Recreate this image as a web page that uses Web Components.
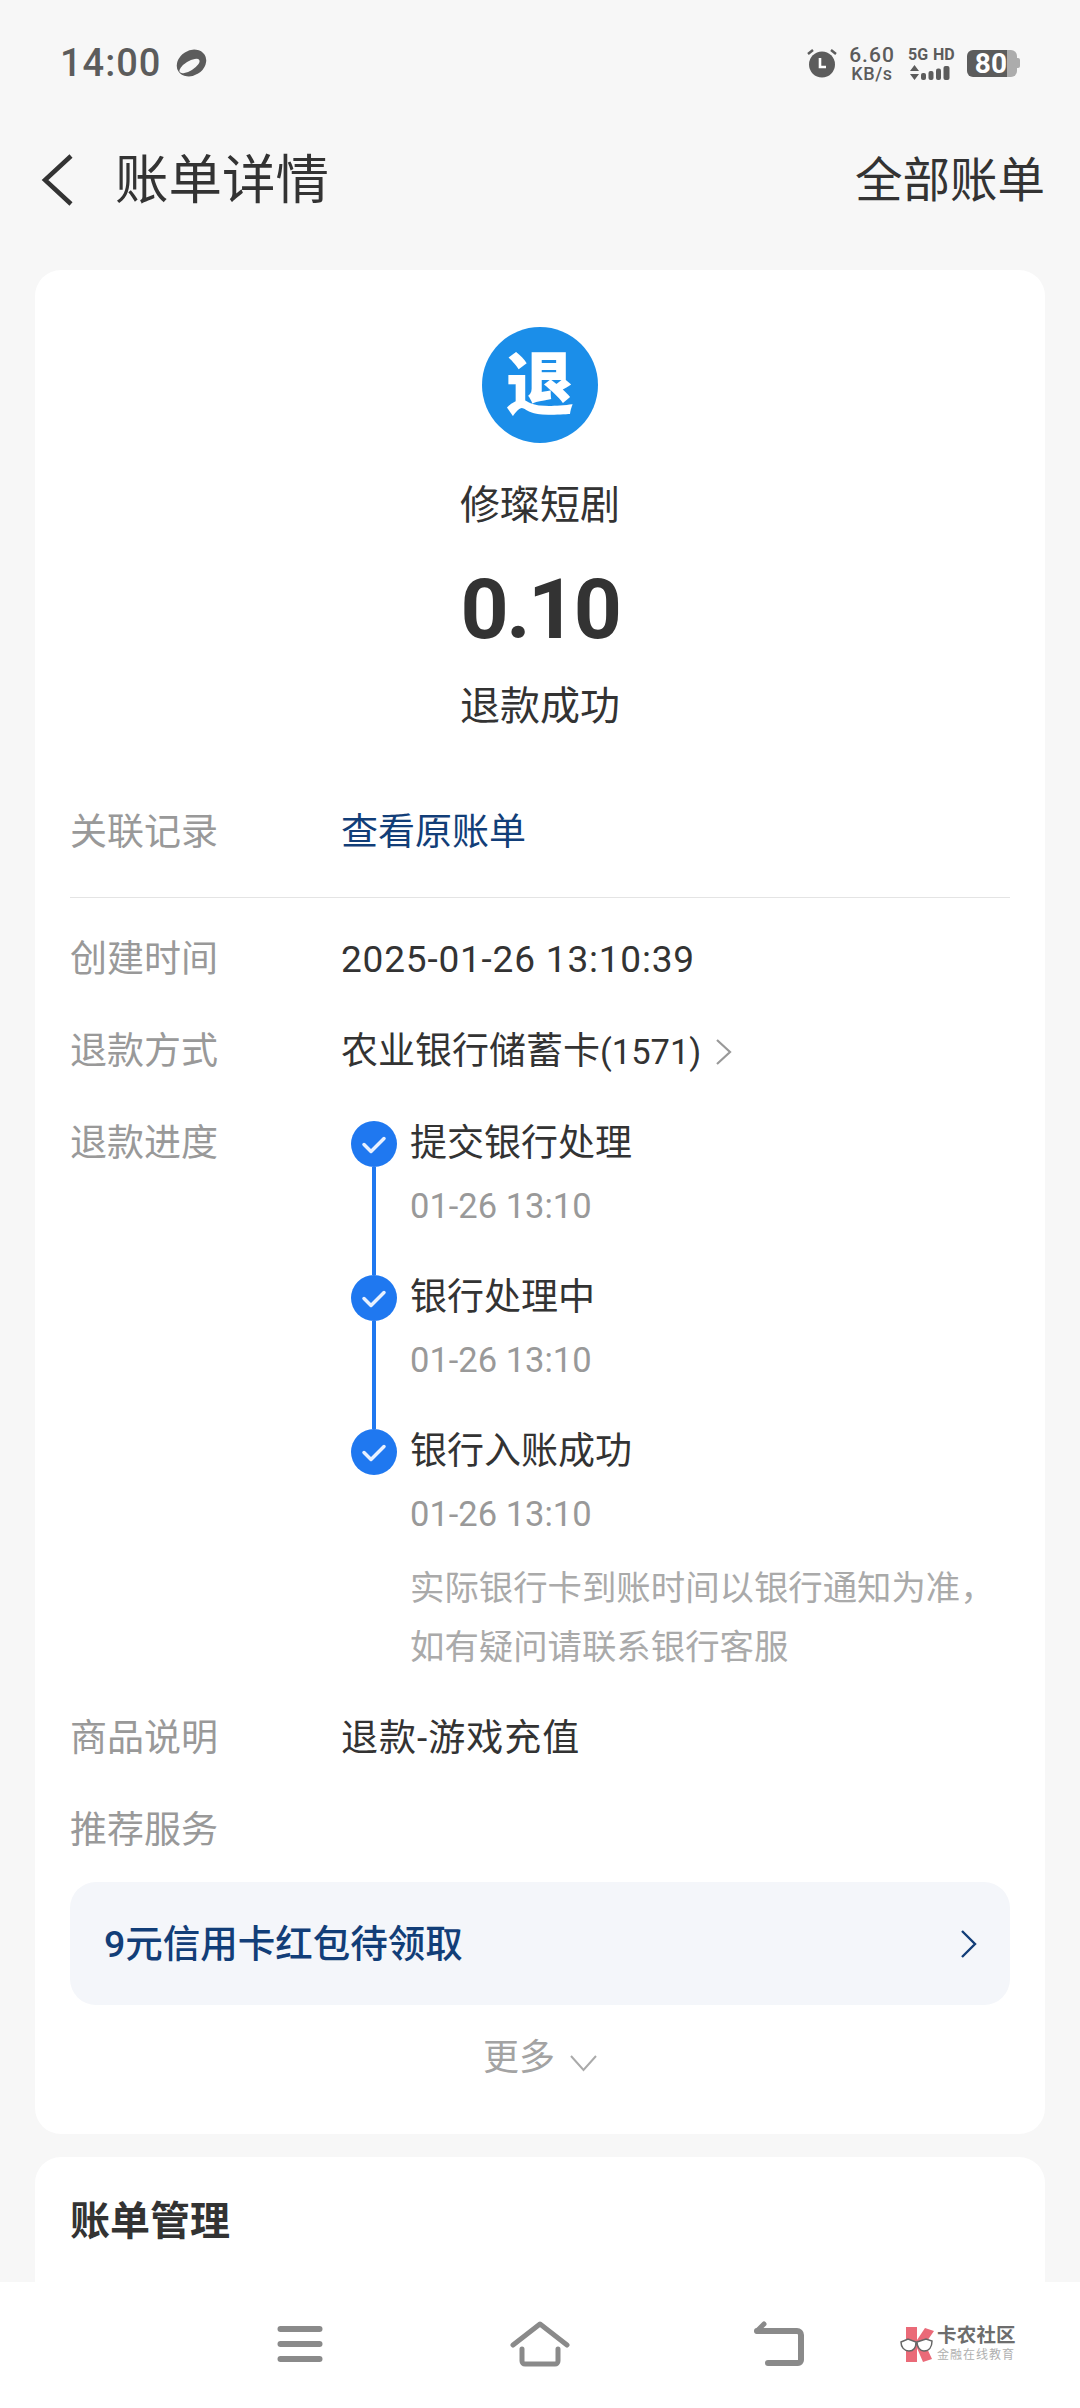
<!DOCTYPE html>
<html lang="zh">
<head>
<meta charset="utf-8">
<title>账单详情</title>
<style>
  html, body { margin: 0; padding: 0; }
  body {
    width: 1080px;
    height: 2408px;
    overflow: hidden;
    background: #f7f7f7;
    color: #333;
    font-family: Roboto, "Noto Sans CJK SC", sans-serif;
    display: flex;
    flex-direction: column;
  }
  main { flex: 1; min-height: 0; overflow: hidden; display: flex; flex-direction: column; gap: 23px; padding: 0 35px; }
</style>
</head>
<body>
  <status-bar></status-bar>
  <title-bar heading="账单详情" action="全部账单"></title-bar>
  <main>
    <bill-card>
      <bill-head name="修璨短剧" amount="0.10" state="退款成功"></bill-head>
      <info-row label="关联记录" top="66"><span style="color:#123e78">查看原账单</span></info-row>
      <hr-line></hr-line>
      <info-row label="创建时间"><span style="letter-spacing:.8px">2025-01-26 13:10:39</span></info-row>
      <info-row label="退款方式" more><span>农业银行储蓄卡<span style="font-size:34.500px">(1571)</span></span></info-row>
      <info-row label="退款进度">
        <progress-step heading="提交银行处理" time="01-26 13:10"></progress-step>
        <progress-step heading="银行处理中" time="01-26 13:10"></progress-step>
        <progress-step heading="银行入账成功" time="01-26 13:10" last>实际银行卡到账时间以银行通知为准，<br>如有疑问请联系银行客服</progress-step>
      </info-row>
      <info-row label="商品说明"><span style="letter-spacing:1px">退款-游戏充值</span></info-row>
      <info-row label="推荐服务"></info-row>
      <promo-link>9元信用卡红包待领取</promo-link>
      <more-link>更多</more-link>
    </bill-card>
    <bill-card>
      <section-title>账单管理</section-title>
    </bill-card>
  </main>
  <bottom-nav></bottom-nav>

<script>
class StatusBar extends HTMLElement {
  constructor() {
    super();
    this.attachShadow({ mode: 'open' });
    this.shadowRoot.innerHTML = `
    <style>
      :host { display: flex; align-items: center; height: 126px; padding: 0 60px 0 60px; color: #5c5c5c; flex: none; }
      .time { font-size: 38px; font-weight: 500; letter-spacing: 1px; line-height: 1; }
      .planet { margin-left: 15px; }
      .right { margin-left: auto; display: flex; align-items: center; }
      .speed { margin-left: 10px; width: 50px; display: flex; flex-direction: column; align-items: center; font-weight: 500; margin-top: 1px; }
      .speed b { font-size: 21px; line-height: 20px; font-weight: 500; letter-spacing: 1px; }
      .speed span { font-size: 18px; line-height: 18px; letter-spacing: .6px; }
      .net { margin-left: 11px; width: 48px; display: flex; flex-direction: column; gap: 3px; }
      .net b { font-size: 16px; line-height: 15px; font-weight: 700; white-space: nowrap; word-spacing: 1px; }
      .batt { margin-left: 11px; display: flex; align-items: center; }
      .level { width: 40px; height: 27px; background: #5c5c5c; border-radius: 6px 0 0 6px; color: #fff; font-size: 28px; font-weight: 700; line-height: 27px; text-align: right; box-sizing: border-box; letter-spacing: 0; }
      .rest { width: 10px; height: 27px; background: #acacac; border-radius: 0 6px 6px 0; }
      .nub { width: 3px; height: 10px; background: #acacac; border-radius: 0 2px 2px 0; }
    </style>
    <span class="time">14:00</span>
    <svg class="planet" width="31" height="28" viewBox="0 0 31 28">
      <ellipse cx="15.500" cy="14" rx="15.500" ry="12.500" transform="rotate(-32 15.500 14)" fill="#5c5c5c"/>
      <ellipse cx="13.500" cy="17" rx="11.500" ry="4.600" transform="rotate(-32 13.500 17)" fill="#f7f7f7"/>
    </svg>
    <div class="right">
      <svg width="30" height="30" viewBox="0 0 30 30">
        <circle cx="15" cy="16.500" r="13" fill="#5c5c5c"/>
        <path d="M1 6l5-4M29 6l-5-4" stroke="#5c5c5c" stroke-width="2.500" fill="none"/>
        <path d="M13 10v9h6" stroke="#fff" stroke-width="2.600" fill="none"/>
      </svg>
      <div class="speed"><b>6.60</b><span>KB/s</span></div>
      <div class="net">
        <b>5G HD</b>
        <svg width="48" height="15" viewBox="0 0 48 15" fill="#5c5c5c">
          <path d="M6.500 0l4.500 6H2zM6.500 15L2 9h9z"/>
          <rect x="13" y="8" width="5" height="7" rx="2"/>
          <rect x="20.500" y="6" width="5" height="9" rx="2"/>
          <rect x="28" y="3.500" width="5" height="11.500" rx="2"/>
          <rect x="35.500" y="1" width="6" height="14" rx="2"/>
        </svg>
      </div>
      <div class="batt"><span class="level">80</span><span class="rest"></span><span class="nub"></span></div>
    </div>
    `;
  }
}

class TitleBar extends HTMLElement {
  constructor() {
    super();
    this.attachShadow({ mode: 'open' });
  }
  connectedCallback() {
    this.shadowRoot.innerHTML = `
    <style>
      :host { display: flex; align-items: center; height: 108px; margin-bottom: 36px; padding: 0 35px 0 41px; flex: none; color: #333; }
      h1 { margin: 2px 0 0 42px; font-size: 53.500px; font-weight: 400; line-height: 60px; }
      span { margin: 2px 0 0 auto; font-size: 47.500px; line-height: 60px; }
    </style>
    <svg width="32" height="52" viewBox="0 0 32 52"><path d="M30 2L4 26l26 24" fill="none" stroke="#333" stroke-width="4.500"/></svg>
    <h1>${this.getAttribute('heading')}</h1>
    <span>${this.getAttribute('action')}</span>
    `;
  }
}

class BillCard extends HTMLElement {
  constructor() {
    super();
    this.attachShadow({ mode: 'open' });
    this.shadowRoot.innerHTML = `
    <style>
      :host { display: block; background: #fff; border-radius: 26px; padding: 0 35px; flex: none; }
    </style>
    <slot></slot>
    `;
  }
}

class BillHead extends HTMLElement {
  constructor() {
    super();
    this.attachShadow({ mode: 'open' });
  }
  connectedCallback() {
    this.shadowRoot.innerHTML = `
    <style>
      :host { display: flex; flex-direction: column; align-items: center; padding-top: 57px; }
      .badge { width: 116px; height: 116px; border-radius: 50%; background: #1b8ee9; color: #fff; font-size: 68px; font-weight: 900; line-height: 106px; text-align: center; font-family: "Noto Sans CJK SC", sans-serif; }
      .name { margin-top: 33px; font-size: 40px; line-height: 60px; }
      .amount { margin-top: 24px; font-size: 84px; font-weight: 700; line-height: 100px; letter-spacing: -2.500px; }
      .state { margin-top: 17px; font-size: 40px; line-height: 60px; }
    </style>
    <div class="badge">退</div>
    <div class="name">${this.getAttribute('name')}</div>
    <div class="amount">${this.getAttribute('amount')}</div>
    <div class="state">${this.getAttribute('state')}</div>
    `;
  }
}

class InfoRow extends HTMLElement {
  constructor() {
    super();
    this.attachShadow({ mode: 'open' });
  }
  connectedCallback() {
    const more = this.hasAttribute('more')
      ? '<svg width="18" height="28" viewBox="0 0 18 28"><path d="M2 2l13 12L2 26" fill="none" stroke="#999" stroke-width="2.200"/></svg>'
      : '';
    const top = this.getAttribute('top');
    this.shadowRoot.innerHTML = `
    <style>
      :host { display: flex; align-items: flex-start; padding: 16px 0; font-size: 37px; line-height: 60px; color: #333; ${top ? 'margin-top:' + (top - 16) + 'px;' : ''} }
      .label { width: 271px; flex: none; color: #999; }
      .value { flex: 1; display: flex; flex-direction: column; min-width: 0; }
      .line { display: flex; align-items: center; gap: 14px; }
    </style>
    <div class="label">${this.getAttribute('label')}</div>
    ${more ? `<div class="line"><slot></slot>${more}</div>` : '<div class="value"><slot></slot></div>'}
    `;
  }
}

class HrLine extends HTMLElement {
  constructor() {
    super();
    this.attachShadow({ mode: 'open' });
    this.shadowRoot.innerHTML = `<style>:host { display: block; height: 1px; background: #e4e4e4; margin: 18px 0 16px; }</style>`;
  }
}

class ProgressStep extends HTMLElement {
  constructor() {
    super();
    this.attachShadow({ mode: 'open' });
  }
  connectedCallback() {
    const last = this.hasAttribute('last');
    this.shadowRoot.innerHTML = `
    <style>
      :host { display: flex; gap: 13px; padding-left: 10px; }
      :host(:first-child) { margin-top: 7px; }
      .rail { width: 46px; flex: none; display: flex; flex-direction: column; align-items: center; }
      .dot { width: 46px; height: 46px; flex: none; }
      .wire { flex: 1; width: 4px; background: #1f78f0; }
      .body { padding-bottom: ${last ? 0 : 39}px; }
      .title { font-size: 37px; line-height: 46px; color: #333; }
      .time { margin-top: 9px; font-size: 34.500px; line-height: 60px; color: #999; }
      .note { margin-top: 15px; font-size: 34.400px; line-height: 59px; color: #aaa; white-space: nowrap; }
    </style>
    <div class="rail">
      <svg class="dot" viewBox="0 0 46 46">
        <circle cx="23" cy="23" r="23" fill="#1f78f0"/>
        <path d="M13 23.500l7 7 13-13" fill="none" stroke="#e8f1ff" stroke-width="3.500" stroke-linecap="round" stroke-linejoin="round"/>
      </svg>
      ${last ? '' : '<div class="wire"></div>'}
    </div>
    <div class="body">
      <div class="title">${this.getAttribute('heading')}</div>
      <div class="time">${this.getAttribute('time')}</div>
      ${last ? '<div class="note"><slot></slot></div>' : ''}
    </div>
    `;
  }
}

class PromoLink extends HTMLElement {
  constructor() {
    super();
    this.attachShadow({ mode: 'open' });
    this.shadowRoot.innerHTML = `
    <style>
      :host { display: flex; align-items: center; justify-content: space-between; height: 123px; margin-top: 5px; padding: 0 33px 0 34px; border-radius: 26px; background: #f4f6fa; color: #123e78; font-size: 37.500px; font-weight: 500; }
      span { margin-bottom: 6px; }
    </style>
    <span><slot></slot></span>
    <svg width="17" height="28" viewBox="0 0 17 28"><path d="M2 1l13 13L2 27" fill="none" stroke="#123e78" stroke-width="2.400"/></svg>
    `;
  }
}

class MoreLink extends HTMLElement {
  constructor() {
    super();
    this.attachShadow({ mode: 'open' });
    this.shadowRoot.innerHTML = `
    <style>
      :host { display: flex; align-items: center; justify-content: center; gap: 15px; height: 60px; margin-top: 23px; padding-bottom: 46px; color: #a3a3a3; font-size: 36px; line-height: 60px; }
      svg { margin-top: 10px; }
    </style>
    <span><slot></slot></span>
    <svg width="27" height="18" viewBox="0 0 27 18"><path d="M1 2l12.500 14L26 2" fill="none" stroke="#aaa" stroke-width="2"/></svg>
    `;
  }
}

class SectionTitle extends HTMLElement {
  constructor() {
    super();
    this.attachShadow({ mode: 'open' });
    this.shadowRoot.innerHTML = `
    <style>
      :host { display: block; padding: 35px 0 60px; font-size: 40px; font-weight: 700; line-height: 60px; color: #333; }
    </style>
    <slot></slot>
    `;
  }
}

class BottomNav extends HTMLElement {
  constructor() {
    super();
    this.attachShadow({ mode: 'open' });
    this.shadowRoot.innerHTML = `
    <style>
      :host { display: grid; grid-template-columns: 180px 240px 240px 240px 180px; align-items: center; justify-items: center; height: 126px; padding-bottom: 2px; box-sizing: border-box; background: #fff; flex: none; }
      .logo { justify-self: start; margin-left: 0; display: flex; align-items: center; gap: 3px; white-space: nowrap; }
      .words { display: flex; flex-direction: column; }
      .big { font-size: 19.500px; line-height: 22px; font-weight: 700; color: #6d6d6d; letter-spacing: .2px; }
      .small { font-size: 12px; line-height: 16px; color: #b0b0b0; letter-spacing: 1px; }
    </style>
    <span></span>
    <svg width="46" height="38" viewBox="0 0 46 38" fill="#8a8a8a">
      <rect x="0.500" y="1" width="45" height="6" rx="3"/>
      <rect x="0.500" y="16" width="45" height="6" rx="3"/>
      <rect x="0.500" y="31" width="45" height="6" rx="3"/>
    </svg>
    <svg width="60" height="46" viewBox="0 0 60 46" fill="none" stroke="#8a8a8a" stroke-width="5" stroke-linecap="round" stroke-linejoin="round">
      <path d="M3 24L30 3l27 21"/>
      <path d="M12 28v12a3 3 0 0 0 3 3h30a3 3 0 0 0 3-3V28"/>
    </svg>
    <svg width="52" height="46" viewBox="0 0 52 46" fill="none" stroke="#8a8a8a" stroke-width="6" stroke-linecap="round" stroke-linejoin="round">
      <path d="M3 10h40a4 4 0 0 1 4 4v25a3 3 0 0 1-3 3H14"/>
      <path d="M3 10l7-7" stroke-width="5"/>
    </svg>
    <div class="logo">
      <svg width="34" height="36" viewBox="0 0 34 36">
        <path fill="#ea6a78" d="M6 1h11v13L25 2l9 3-9 13 7 15-9 3-6-14v14H6z"/>
        <path fill="#fff" stroke="#666" stroke-width="1.500" d="M1 16l7-3 8 3c0 5-2 9-7 9-5 0-8-4-8-9zM17 16l9-3 6 2c0 6-3 10-8 10-4 0-7-4-7-9z"/>
      </svg>
      <div class="words"><span class="big">卡农社区</span><span class="small">金融在线教育</span></div>
    </div>
    `;
  }
}

customElements.define('status-bar', StatusBar);
customElements.define('title-bar', TitleBar);
customElements.define('bill-card', BillCard);
customElements.define('bill-head', BillHead);
customElements.define('info-row', InfoRow);
customElements.define('hr-line', HrLine);
customElements.define('progress-step', ProgressStep);
customElements.define('promo-link', PromoLink);
customElements.define('more-link', MoreLink);
customElements.define('section-title', SectionTitle);
customElements.define('bottom-nav', BottomNav);
</script>
</body>
</html>
